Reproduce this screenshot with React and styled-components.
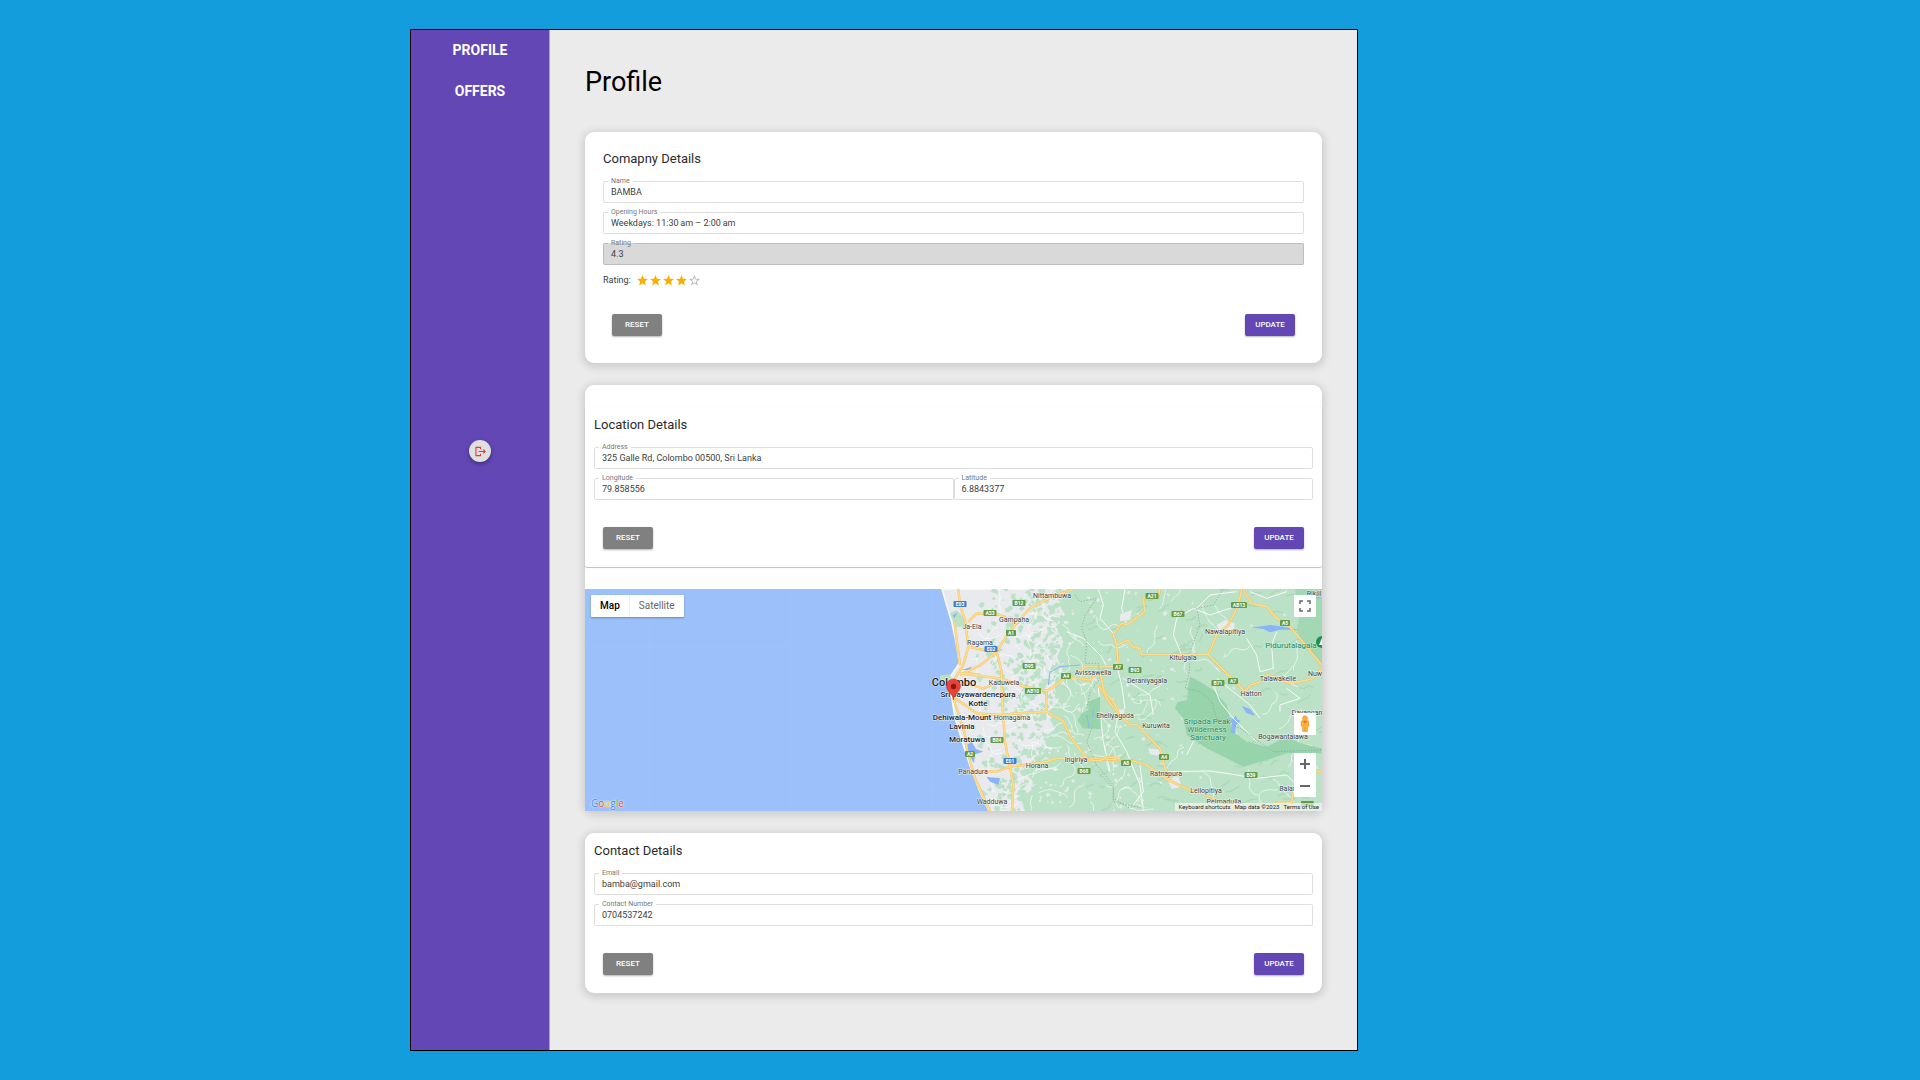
import React from "react";
import styled, { createGlobalStyle, css } from "styled-components";

const GlobalStyle = createGlobalStyle`
  *, *::before, *::after { box-sizing: border-box; }
  body {
    margin: 0;
    background: #149ddd;
    font-family: Roboto, "Liberation Sans", sans-serif;
    color: #000;
  }
`;

const Page = styled.div`
  display: grid;
  grid-template-columns: minmax(0, 410fr) minmax(0, 948fr) minmax(0, 562fr);
  min-height: 100vh;
  padding: 29px 0;
`;

const Frame = styled.div`
  grid-column: 2;
  display: flex;
  border: 1px solid #000;
  background: #ebebeb;
`;

const Sidebar = styled.nav`
  flex: 0 0 139px;
  display: flex;
  flex-direction: column;
  align-items: center;
  gap: 25px;
  padding-top: 12px;
  background: #6247b5;
  border-right: 1px solid #a99bd6;
`;

const NavLink = styled.a`
  color: #fff;
  font-size: 14px;
  line-height: 16px;
  font-weight: 700;
  text-decoration: none;
`;

const LogoutButton = styled.button`
  display: flex;
  align-items: center;
  justify-content: center;
  width: 22px;
  height: 22px;
  margin-top: 316px;
  padding: 0;
  border: 0;
  border-radius: 50%;
  background: #e0e0e0;
  color: #e53935;
  box-shadow: 0 2px 4px rgba(0, 0, 0, 0.35);
`;

const Main = styled.main`
  flex: 1;
  min-width: 0;
  display: flex;
  flex-direction: column;
  gap: 22px;
  padding: 36px 35px 56px;
`;

const PageTitle = styled.h1`
  margin: 0 0 12px;
  font-size: 27px;
  line-height: 32px;
  font-weight: 400;
`;

const Card = styled.section`
  padding: ${(p) => p.$pad || "0"};
  border-radius: 9px;
  background: #fff;
  box-shadow: 0 2px 9px 2px rgba(0, 0, 0, 0.14);
`;

const Paper = styled.form`
  padding: 9px 9px 18px;
  ${(p) =>
    p.$raised &&
    css`
      margin-bottom: 22px;
      border-radius: 2px;
      box-shadow: 0 1px 1px rgba(0, 0, 0, 0.24), 0 0 1px rgba(0, 0, 0, 0.14);
    `}
`;

const CardTitle = styled.h2`
  margin: 0 0 10px;
  font-size: 13px;
  line-height: 17px;
  font-weight: 400;
  color: #2b2b2b;
`;

const Fields = styled.div`
  display: grid;
  gap: 5px;
`;

const FieldRow = styled.div`
  display: grid;
  grid-template-columns: 1fr 1fr;
`;

const Outline = styled.fieldset`
  min-width: 0;
  margin: 0;
  padding: 0 4px;
  border: 1px solid ${(p) => (p.disabled ? "#bdbdbd" : "#dedede")};
  border-radius: 2px;
  background: ${(p) => (p.disabled ? "#d9d9d9" : "transparent")};
`;

const FieldLabel = styled.legend`
  padding: 0 3px;
  font-size: 7px;
  line-height: 8px;
  color: #777;
`;

const FieldInput = styled.input`
  display: block;
  width: 100%;
  height: 17px;
  padding: 0 3px 4px;
  border: 0;
  outline: 0;
  background: transparent;
  font: 9px/13px Roboto, "Liberation Sans", sans-serif;
  color: #404040;
`;

const RatingRow = styled.div`
  display: flex;
  align-items: center;
  gap: 5px;
  height: 20px;
  margin: 5px 0 7px;
  font-size: 9px;
  color: #404040;
`;

const Stars = styled.span`
  display: flex;
`;

const Actions = styled.div`
  display: flex;
  justify-content: space-between;
  padding: ${(p) => (p.$tight ? "17px 9px 0" : "27px 9px 0")};
`;

const Button = styled.button`
  width: 50px;
  height: 22px;
  padding: 0;
  border: 0;
  border-radius: 2px;
  background: ${(p) => (p.$primary ? "#6247b5" : "#808080")};
  color: #fff;
  font: 500 8px/16px Roboto, "Liberation Sans", sans-serif;
  box-shadow: 0 1px 2px rgba(0, 0, 0, 0.3);
`;

const MapBox = styled.div`
  position: relative;
  height: 222px;
  overflow: hidden;
  background: #9cc0f9;
`;

const MapDrawing = styled.svg`
  display: block;
  width: 100%;
  height: 222px;
`;

const MapTypes = styled.div`
  position: absolute;
  top: 6px;
  left: 6px;
  display: flex;
  height: 22px;
  background: #fff;
  border-radius: 1px;
  box-shadow: 0 1px 2px rgba(0, 0, 0, 0.3);
`;

const MapType = styled.button`
  padding: 0 9px;
  border: 0;
  background: none;
  font: 10px/22px Roboto, "Liberation Sans", sans-serif;
  font-weight: ${(p) => (p.$active ? 500 : 400)};
  color: ${(p) => (p.$active ? "#000" : "#666")};
  & + & { border-left: 1px solid #eee; }
`;

const MapTools = styled.div`
  position: absolute;
  top: 6px;
  right: 6px;
  bottom: 14px;
  display: flex;
  flex-direction: column;
`;

const MapTool = styled.button`
  display: flex;
  align-items: center;
  justify-content: center;
  width: 22px;
  height: 22px;
  padding: 0;
  border: 0;
  border-radius: 1px;
  background: #fff;
  color: #666;
  margin-top: ${(p) => p.$push || "0"};
`;

const Attribution = styled.div`
  position: absolute;
  right: 0;
  bottom: 0;
  display: flex;
  gap: 4px;
  padding: 0 3px;
  background: rgba(245, 245, 245, 0.7);
  font-size: 6px;
  line-height: 8px;
  white-space: nowrap;
  color: #222;
`;

const MapLink = styled.a`
  color: inherit;
  text-decoration: none;
`;

const GoogleMark = styled.a`
  position: absolute;
  left: 6px;
  bottom: 1px;
  font: 10px/13px "Open Sans", sans-serif;
  text-decoration: none;
`;

const Letter = styled.span`
  color: ${(p) => p.$color};
  text-shadow: 0 0 2px #fff, 0 0 1px #fff;
`;

const towns = [
  ["Nittambuwa", 467, 6], ["Gampaha", 429, 30], ["Ja-Ela", 387, 37], ["Ragama", 395, 53],
  ["Avissawella", 508, 83], ["Kaduwela", 419, 93], ["Homagama", 427, 128], ["Horana", 452, 176],
  ["Ingiriya", 491, 170], ["Panadura", 388, 182], ["Wadduwa", 407, 212], ["Rikill", 729, 4],
  ["Nawalapitiya", 640, 42], ["Kitulgala", 598, 68], ["Deraniyagala", 562, 91],
  ["Talawakelle", 693, 89], ["Nuw", 730, 84], ["Hatton", 666, 104], ["Eheliyagoda", 530, 126],
  ["Kuruwita", 571, 136], ["Dayangan", 722, 123], ["Bogawantalawa", 698, 147],
  ["Ratnapura", 581, 184], ["Lellopitiya", 621, 201], ["Pelmadulla", 639, 212], ["Balan", 703, 199],
];
const cities = [
  ["Sri Jayawardenepura", 393, 105], ["Kotte", 393, 114], ["Dehiwala-Mount", 377, 128],
  ["Lavinia", 377, 137], ["Moratuwa", 382, 150],
];
const parks = [
  ["Sripada Peak", 622, 132], ["Wilderness", 622, 140], ["Sanctuary", 623, 148], ["Pidurutalagala", 706, 56],
];
const shields = [
  ["E03", 375, 15], ["B12", 434, 14], ["A33", 405, 24], ["A1", 426, 44], ["E02", 406, 60],
  ["B95", 444, 77], ["A4", 481, 87], ["AB10", 448, 102], ["B84", 412, 151], ["A2", 385, 165],
  ["E01", 425, 172], ["B68", 499, 182], ["A21", 567, 7], ["B67", 593, 25], ["AB13", 654, 16],
  ["A5", 700, 34], ["A7", 533, 78], ["B93", 550, 81], ["B71", 633, 94], ["A7", 648, 92],
  ["A4", 579, 168], ["A8", 541, 174], ["B39", 666, 186],
];

function makeRandom(seed) {
  let s = seed;
  return () => {
    s = (s * 16807) % 2147483647;
    return s / 2147483647;
  };
}

function blob(rnd, x, y, r) {
  const pts = [];
  for (let i = 0; i < 8; i += 1) {
    const a = (i / 8) * Math.PI * 2;
    const d = r * (0.4 + rnd() * 0.9);
    pts.push(`${(x + Math.cos(a) * d).toFixed(1)},${(y + Math.sin(a) * d).toFixed(1)}`);
  }
  return `M${pts.join("L")}Z`;
}

// Vegetation gets denser from the coast to the hills.
function vegetation() {
  const rnd = makeRandom(71);
  let d = "";
  for (let i = 0; i < 2800; i += 1) {
    const x = 320 + rnd() * 190;
    const y = rnd() * 222;
    const south = y > 145 ? 0.25 : 0;
    const density = (x - 385 - Math.max(0, y - 100) * 0.2) / 110 + south;
    if (x > 392 && rnd() < density * 0.8) d += blob(rnd, x, y, 1.5 + rnd() * 2.5);
  }
  return d;
}

function villages() {
  const rnd = makeRandom(409);
  let d = "";
  for (let i = 0; i < 190; i += 1) {
    const x = 455 + rnd() * rnd() * 275;
    d += blob(rnd, x, rnd() * 222, 0.8 + rnd() * 1.6);
  }
  return d;
}

function relief() {
  const rnd = makeRandom(88);
  let d = "";
  for (let i = 0; i < 110; i += 1) {
    let x = 500 + rnd() * 237;
    let y = rnd() * 222;
    d += `M${x.toFixed(1)},${y.toFixed(1)}`;
    for (let k = 0; k < 3; k += 1) {
      x += 1 + rnd() * 5;
      y += -4 + rnd() * 6;
      d += `L${x.toFixed(1)},${y.toFixed(1)}`;
    }
  }
  return d;
}

function lanes() {
  const rnd = makeRandom(1234);
  let d = "";
  for (let i = 0; i < 105; i += 1) {
    let x = i < 65 ? 385 + rnd() * 115 : 490 + rnd() * 240;
    let y = rnd() * 222;
    let a = rnd() * Math.PI * 2;
    d += `M${x.toFixed(1)},${y.toFixed(1)}`;
    for (let k = 0; k < 8; k += 1) {
      a += -0.8 + rnd() * 1.6;
      x = Math.max(392 + (y > 100 ? (y - 100) * 0.15 : 0), x + Math.cos(a) * 4);
      y += Math.sin(a) * 4;
      d += `L${x.toFixed(1)},${y.toFixed(1)}`;
    }
  }
  return d;
}

const westRoads =
  "M175 12L180 60L195 105L205 185L190 240L165 280L160 340L180 400L195 450L202 500L225 580L270 678" +
  "M205 110L230 85L300 90L345 112M205 185L250 195L290 200L305 260L305 300L310 400L315 470L330 545L340 600L336 678" +
  "M180 270L245 238L290 200L315 160L340 125L390 70L450 38L520 12" +
  "M163 110L172 180L180 240M180 265L300 280L375 305L440 318L468 300L498 276L570 285L592 262" +
  "M200 264L240 270M165 340L230 385L300 390L350 385L440 380L490 408L508 450L545 500L560 520" +
  "M440 318L438 380M190 557L290 560L330 545L370 540L440 530L470 520L520 520L600 528L620 516L660 520" +
  "M180 290L250 310L300 290M600 260L612 320L640 350L655 378";
const eastRoads =
  "M-60 262L-45 245L55 245L50 180L85 165L96 185L120 190L124 208L240 210L300 208L325 208L380 265L435 320L450 300L480 292L500 268L570 295L600 290L640 280L665 250" +
  "M50 180L40 148L65 115L80 120L135 80L130 40L175 35L180 12M425 12L415 60L400 90L385 120L350 150L325 208" +
  "M430 16L455 55L500 65L530 100L560 115L600 160L640 210L665 240" +
  "M-5 300L30 355L60 390L90 420L110 418L150 460L180 490L195 550L215 590L270 615L300 622L340 640L400 668L480 668L530 655L575 652L580 620L600 620" +
  "M-40 520L60 525L100 528L140 540L170 562L215 592M650 560L670 560";
const eastLanes =
  "M-5 12L10 60L0 100L40 145M80 120L65 70L75 12M-100 140L-50 160L5 215L20 245M50 240L65 300L75 370L55 385L45 440L80 500L120 600L130 670" +
  "M70 280L150 330L160 390M-5 300L0 380L10 470L30 560M230 100L280 70L330 90L420 60M230 100L220 150L245 210M340 300L360 350L400 400L440 440L470 470" +
  "M200 560L330 558L380 565L470 580L560 570L590 600M440 160L470 210L480 260L520 250L515 180L530 140M260 510L280 470M350 280L450 360L480 400" +
  "M560 310L600 340L540 360L540 380M120 540L130 620L100 660M450 20L500 40L560 20M290 70L330 30L410 20";

function Shield({ code, x, y }) {
  const w = code.length * 3 + 4;
  return (
    <g>
      <rect x={x - w / 2} y={y - 3} width={w} height="6" rx="1" fill={code[0] === "E" ? "#3f7ed0" : "#639c45"} />
      <text x={x} y={y + 2} textAnchor="middle" fontSize="5" fontWeight="700" fill="#fff">{code}</text>
    </g>
  );
}

function MapLabels({ items, size, weight, fill, halo }) {
  return (
    <g fontSize={size} fontWeight={weight} fill={fill} stroke={halo} strokeWidth="1" strokeOpacity="0.75" paintOrder="stroke" textAnchor="middle">
      {items.map(([name, x, y]) => (
        <text key={name} x={x} y={y + 3}>{name}</text>
      ))}
    </g>
  );
}

function CoastMap() {
  const land =
    "M126 12L140 60L155 110L168 170L178 235L160 262L150 275L150 300L156 340L164 395L178 440L190 480L203 520L218 565L240 620L268 680L2000 680L2000 12Z";
  return (
    <MapDrawing viewBox="0 0 737 222" preserveAspectRatio="xMidYMid slice" role="img" aria-label="Map of Colombo">
      <defs>
        <clipPath id="land"><path transform="scale(.33333) translate(945 -12)" d={land} /></clipPath>
      </defs>
      <rect width="737" height="222" fill="#9cc0f9" />
      <path d="M0 58.500H205M64 0V222M205 0V222M205 200.500H385M347 0V222" stroke="#a6c5f6" strokeWidth=".5" />
      <g transform="scale(.33333) translate(945 -12)">
        <path d={land} fill="#e8eaed" stroke="#f8f9fa" strokeWidth="5" />
        <path d="M120 272L150 268L155 280L135 295L120 288ZM150 85L168 75L190 95L205 125L165 125Z" fill="#bbe2c6" />
      </g>
      <g clipPath="url(#land)">
        <path d="M482 0L474 14L480 26L470 40L480 52L472 68L478 82L468 96L474 112L462 124L470 140L458 150L468 160L450 168L440 184L452 196L436 210L440 222H737V0Z" fill="#bbe2c6" />
        <path d={vegetation()} fill="#bbe2c6" />
        <path d={relief()} fill="none" stroke="#add9ba" strokeWidth="1.500" strokeLinejoin="round" />
        <path d={villages()} fill="#e4e9e8" />
        <path d={lanes()} fill="none" stroke="#fff" strokeWidth=".7" opacity=".85" />
      </g>
      <g transform="scale(.33333) translate(1545 -12)">
        <path d="M270 275L300 290L340 315L380 360L400 440L440 470L500 485L560 455L600 475L665 490L665 505L560 505L500 525L430 545L380 520L320 490L260 450L250 400L225 370L232 352L262 345L265 300Z" fill="#97d3ab" />
        <path d="M585 12L666 12L666 240L625 190L590 140L600 80Z" fill="#a2d8b4" />
        <path d="M455 128L510 120L540 124L600 135L540 134L510 142L490 132ZM425 362L450 372L466 392L440 385ZM385 398L400 402L408 390L410 402L422 408L408 420L405 445L392 442L398 420ZM668 40L640 28L650 40Z" fill="#8ab4f8" />
        <path d={eastLanes} fill="none" stroke="#f7fafa" strokeWidth="3" strokeLinejoin="round" />
        <path d="M370 12L340 60L290 70L300 120L270 200L268 260L256 310L300 320L335 350L350 400L420 430L520 500L665 495M-250 340L-220 300M-5 560L40 610L40 650L130 670" fill="none" stroke="#8fa89a" strokeWidth="2.500" strokeDasharray="4 5" />
        <path d="M350 120L375 105L405 115L400 140L365 150ZM200 580L235 575L245 605L215 612ZM60 88L95 75L90 105L60 108ZM50 370L75 378L65 395L48 390ZM145 490L185 495L175 512L150 508Z" fill="#e8eaed" />
        <path d={eastRoads} fill="none" stroke="#e9b95c" strokeWidth="7" strokeLinejoin="round" />
        <path d={eastRoads} fill="none" stroke="#fddc8c" strokeWidth="5" strokeLinejoin="round" />
        <path d="M603 648h38v18h-38z" fill="#639c45" />
      </g>
      <g transform="scale(.33333) translate(945 -12)">
        <path d="M565 350L600 335L602 432L548 430L533 405L545 385L565 375Z" fill="#97d3ab" />
        <path d="M560 390L568 430M580 370L578 400M445 300L450 262L480 245L540 240" fill="none" stroke="#8ab4f8" strokeWidth="3" />
        <path d="M200 480L215 470L228 492L250 500L225 508L222 535L210 515ZM260 575L300 580L295 600L270 590ZM185 255L215 245L210 255ZM158 92L172 82L164 100Z" fill="#8ab4f8" />
        <path d="M525 30L540 50L590 40L555 90L545 130L560 170L555 235L595 235L600 280L570 320L560 375M575 430L560 470L590 540L640 600L640 640L690 670" fill="none" stroke="#8fa89a" strokeWidth="2.500" strokeDasharray="4 5" />
        <path d={westRoads} fill="none" stroke="#f0bd5c" strokeWidth="7" strokeLinejoin="round" />
        <path d={westRoads} fill="none" stroke="#fddc8c" strokeWidth="5" strokeLinejoin="round" />
      </g>
      {shields.map(([code, x, y]) => <Shield key={`${code}-${x}`} code={code} x={x} y={y} />)}
      <MapLabels items={towns} size="7" weight="400" fill="#3c4043" halo="#fff" />
      <MapLabels items={parks} size="8" weight="400" fill="#25875a" halo="#d3f0dc" />
      <MapLabels items={cities} size="8" weight="500" fill="#202124" halo="#fff" />
      <MapLabels items={[["Colombo", 369, 94]]} size="11" weight="500" fill="#202124" halo="#fff" />
      <circle cx="737" cy="53" r="6" fill="#1e9150" />
      <path d="M734 56L737 49L740 56Z" fill="#fff" />
      <path d="M368.500 111C368.500 105 361.500 103 361.500 97A7 7 0 0 1 375.500 97C375.500 103 368.500 105 368.500 111Z" fill="#ea4335" stroke="#c5221f" strokeWidth=".5" />
      <circle cx="368.500" cy="97.500" r="2.700" fill="#8f1510" />
    </MapDrawing>
  );
}

function Star({ filled }) {
  return (
    <svg width="13" height="13" viewBox="0 0 24 24" fill={filled ? "#faaf00" : "#b5b5b5"} aria-hidden="true">
      {filled ? (
        <path d="M12 17.270L18.180 21l-1.640-7.030L22 9.240l-7.190-.61L12 2 9.190 8.630 2 9.240l5.460 4.730L5.820 21z" />
      ) : (
        <path d="M22 9.240l-7.190-.62L12 2 9.190 8.630 2 9.240l5.460 4.730L5.820 21 12 17.270 18.180 21l-1.630-7.030L22 9.240zM12 15.400l-3.760 2.270 1-4.280-3.320-2.880 4.380-.38L12 6.100l1.710 4.040 4.380.38-3.320 2.880 1 4.280L12 15.400z" />
      )}
    </svg>
  );
}

function Field({ id, label, value, disabled }) {
  return (
    <Outline disabled={disabled}>
      <FieldLabel><label htmlFor={id}>{label}</label></FieldLabel>
      <FieldInput id={id} defaultValue={value} />
    </Outline>
  );
}

function FormActions({ tight }) {
  return (
    <Actions $tight={tight}>
      <Button type="reset">RESET</Button>
      <Button type="button" $primary>UPDATE</Button>
    </Actions>
  );
}

const google = [["G", "#4285f4"], ["o", "#ea4335"], ["o", "#fbbc04"], ["g", "#4285f4"], ["l", "#34a853"], ["e", "#ea4335"]];

export default function App() {
  return (
    <>
      <GlobalStyle />
      <Page>
        <Frame>
          <Sidebar>
            <NavLink href="#profile">PROFILE</NavLink>
            <NavLink href="#offers">OFFERS</NavLink>
            <LogoutButton type="button" aria-label="Log out">
              <svg width="11" height="11" viewBox="0 0 24 24" fill="none" stroke="currentColor" strokeWidth="2.400" aria-hidden="true">
                <path d="M12 7V3H2v18h10v-4M8 12h14M18 8l4 4-4 4" />
              </svg>
            </LogoutButton>
          </Sidebar>
          <Main>
            <PageTitle>Profile</PageTitle>

            <Card $pad="9px">
              <Paper>
                <CardTitle>Comapny Details</CardTitle>
                <Fields>
                  <Field id="name" label="Name" value="BAMBA" />
                  <Field id="hours" label="Opening Hours" value={"Weekdays: 11:30\u2009am – 2:00\u2009am"} />
                  <Field id="rating" label="Rating" value="4.3" disabled />
                </Fields>
                <RatingRow>
                  Rating:
                  <Stars role="img" aria-label="4 of 5 stars">
                    {[1, 2, 3, 4, 5].map((n) => <Star key={n} filled={n < 5} />)}
                  </Stars>
                </RatingRow>
                <FormActions tight />
              </Paper>
            </Card>

            <Card $pad="22px 0 0">
              <Paper $raised>
                <CardTitle>Location Details</CardTitle>
                <Fields>
                  <Field id="address" label="Address" value="325 Galle Rd, Colombo 00500, Sri Lanka" />
                  <FieldRow>
                    <Field id="longitude" label="Longitude" value="79.858556" />
                    <Field id="latitude" label="Latitude" value="6.8843377" />
                  </FieldRow>
                </Fields>
                <FormActions />
              </Paper>
              <MapBox>
                <CoastMap />
                <MapTypes>
                  <MapType type="button" $active>Map</MapType>
                  <MapType type="button">Satellite</MapType>
                </MapTypes>
                <MapTools>
                  <MapTool type="button" aria-label="Full screen">
                    <svg width="12" height="12" viewBox="0 0 12 12" fill="none" stroke="currentColor" strokeWidth="1.500" aria-hidden="true">
                      <path d="M1 4V1H4M8 1H11V4M11 8V11H8M4 11H1V8" />
                    </svg>
                  </MapTool>
                  <MapTool type="button" aria-label="Street view" $push="auto">
                    <svg width="10" height="18" viewBox="0 0 10 18" aria-hidden="true">
                      <path d="M1 7Q1 5.500 3 5.500H7Q9 5.500 9 7V11L7.500 12V16.500H2.500V12L1 11Z" fill="#fbb03b" stroke="#e8912d" strokeWidth=".5" />
                      <path d="M3 6L5 8.500L7 6ZM5 12V16" fill="#e06c2c" stroke="#e8912d" strokeWidth=".6" />
                      <circle cx="5" cy="3.200" r="2.500" fill="#fbb03b" stroke="#e8912d" strokeWidth=".5" />
                    </svg>
                  </MapTool>
                  <MapTool type="button" aria-label="Zoom in" $push="18px">
                    <svg width="10" height="10" viewBox="0 0 10 10" stroke="currentColor" strokeWidth="2" aria-hidden="true"><path d="M0 5H10M5 0V10" /></svg>
                  </MapTool>
                  <MapTool type="button" aria-label="Zoom out">
                    <svg width="10" height="10" viewBox="0 0 10 10" stroke="currentColor" strokeWidth="2" aria-hidden="true"><path d="M0 5H10" /></svg>
                  </MapTool>
                </MapTools>
                <GoogleMark href="#google" aria-label="Google">
                  {google.map(([ch, color], i) => <Letter key={i} $color={color}>{ch}</Letter>)}
                </GoogleMark>
                <Attribution>
                  <MapLink href="#shortcuts">Keyboard shortcuts</MapLink>
                  <span>Map data ©2023</span>
                  <MapLink href="#terms">Terms of Use</MapLink>
                </Attribution>
              </MapBox>
            </Card>

            <Card>
              <Paper>
                <CardTitle>Contact Details</CardTitle>
                <Fields>
                  <Field id="email" label="Email" value="bamba@gmail.com" />
                  <Field id="phone" label="Contact Number" value="0704537242" />
                </Fields>
                <FormActions />
              </Paper>
            </Card>
          </Main>
        </Frame>
      </Page>
    </>
  );
}
